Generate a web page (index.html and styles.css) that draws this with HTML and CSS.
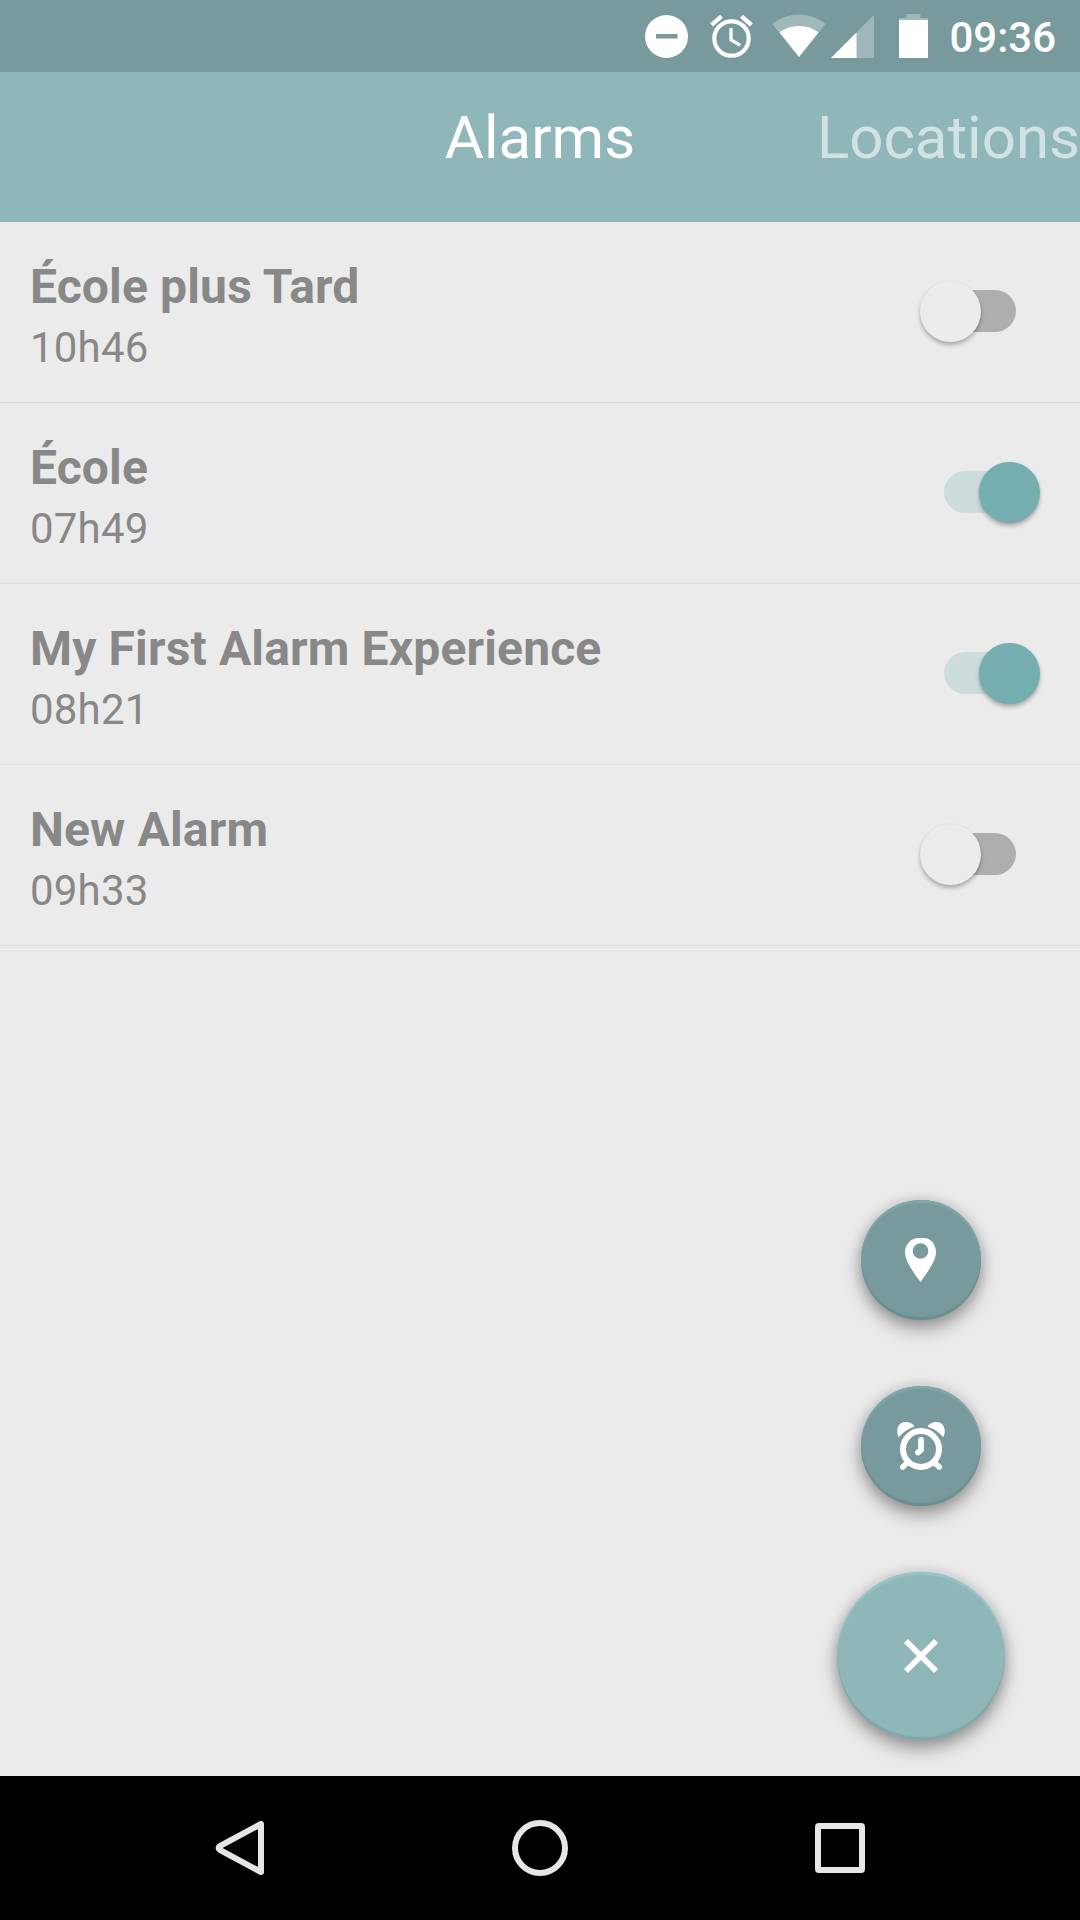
FILE: index.html
```
<!DOCTYPE html>
<html lang="en">
<head>
  <meta charset="UTF-8" />
  <meta name="viewport" content="width=device-width, initial-scale=1.0" />
  <title>Alarms</title>
  <link rel="stylesheet" href="styles.css">
</head>
<body>
  <div class="status-bar">
    <svg class="icon-dnd" width="44" height="44" viewBox="0 0 44 44">
      <circle cx="22.500" cy="22.500" r="21.500" fill="#fff" />
      <rect x="12" y="20" width="21.500" height="4.500" fill="#789a9c" />
    </svg>
    <svg class="icon-alarm" width="44" height="44" viewBox="0 0 44 44" fill="none" stroke="#fff">
      <circle cx="21.500" cy="24.500" r="17.200" stroke-width="4.200" />
      <path d="M1.600 10.800L11.500 2.400M41.400 10.800L31.500 2.400" stroke-width="4.300" />
      <path d="M21 14v11.800l9.200 5.600" stroke-width="3.200" />
    </svg>
    <svg class="icon-wifi" width="54" height="44" viewBox="0 0 54 44" fill="#fff">
      <path d="M27 43L.5 10C8 4 17 .5 27 .5S46 4 53.500 10z" opacity=".3" />
      <path d="M27 43L7.500 18.400C13 14.200 20 12 27 12s14 2.200 19.500 6.400z" />
    </svg>
    <svg class="icon-signal" width="43" height="43" viewBox="0 0 43 43" fill="#fff">
      <path d="M0 43L43 0v43z" opacity=".3" />
      <path d="M0 43l25.500-25.500V43z" />
    </svg>
    <svg class="icon-battery" width="29" height="44" viewBox="0 0 29 44" fill="#fff">
      <path d="M7.500 0h14v4H29v2H0V4h7.500z" opacity=".3" />
      <path d="M0 6h29v38H0z" />
    </svg>
    <span class="clock">09:36</span>
  </div>

  <header class="tabs">
    <span class="tab active">Alarms</span>
    <span class="tab next">Locations</span>
  </header>

  <main>
    <ul class="alarms">
      <li class="alarm">
        <div class="label">
          <div class="name">École plus Tard</div>
          <div class="time">10h46</div>
        </div>
        <div class="switch"><span class="thumb"></span></div>
      </li>
      <li class="alarm">
        <div class="label">
          <div class="name">École</div>
          <div class="time">07h49</div>
        </div>
        <div class="switch on"><span class="thumb"></span></div>
      </li>
      <li class="alarm">
        <div class="label">
          <div class="name">My First Alarm Experience</div>
          <div class="time">08h21</div>
        </div>
        <div class="switch on"><span class="thumb"></span></div>
      </li>
      <li class="alarm">
        <div class="label">
          <div class="name">New Alarm</div>
          <div class="time">09h33</div>
        </div>
        <div class="switch"><span class="thumb"></span></div>
      </li>
    </ul>

    <div class="fab-menu">
      <button class="fab mini" aria-label="Add location">
        <svg width="48" height="48" viewBox="0 0 48 48">
          <path fill="#fff" fill-rule="evenodd" d="M21 2h6C34 2 39 8.500 39 16.500c0 7-6 16.500-15.500 29.500C14 33.500 8 23.500 8 16.500 8 8.500 14 2 21 2zM23.500 7.200a7.800 7.800 0 1 0 0 15.600 7.800 7.800 0 0 0 0-15.600z" />
        </svg>
      </button>
      <button class="fab mini" aria-label="Add alarm">
        <svg width="48" height="48" viewBox="0 0 48 48" fill="none" stroke="#fff" stroke-linecap="round">
          <path d="M1.800 15.200C-2 8 1.500 0 8.500 0c4 0 7.500 1.500 8.800 4.700C11 6.500 6 10 1.800 15.200zM46.200 15.200C50 8 46.500 0 39.500 0c-4 0-7.500 1.500-8.800 4.700C37 6.500 42 10 46.200 15.200z" fill="#fff" stroke="none" />
          <circle cx="24" cy="27" r="18" stroke-width="6" />
          <path d="M24 18v10l-3 2.500" stroke-width="5.800" stroke-linejoin="round" />
          <path d="M10.500 40.500l-4.700 4.500M37.500 40.500l4.700 4.500" stroke-width="5.600" />
        </svg>
      </button>
      <button class="fab" aria-label="Close menu">
        <svg width="34" height="34" viewBox="0 0 34 34">
          <path d="M2 2l30 30M32 2L2 32" stroke="#fff" stroke-width="5.600" />
        </svg>
      </button>
    </div>
  </main>

  <nav class="nav-bar">
    <svg width="60" height="60" viewBox="0 0 60 60">
      <path d="M51 6v48L9.800 31.800q-2.500-1.800 0-3.600z" />
    </svg>
    <svg width="60" height="60" viewBox="0 0 60 60">
      <circle cx="30" cy="30" r="25" />
    </svg>
    <svg width="60" height="60" viewBox="0 0 60 60">
      <rect x="8" y="8" width="44" height="44" rx="1" />
    </svg>
  </nav>
</body>
</html>
```

FILE: styles.css
```
* {
  box-sizing: border-box;
}
body {
  margin: 0;
  height: 1920px;
  display: flex;
  flex-direction: column;
  background-color: #ebebeb;
  font-family: Roboto, 'Liberation Sans', sans-serif;
  overflow: hidden;
}
.status-bar {
  height: 72px;
  display: flex;
  justify-content: flex-end;
  align-items: center;
  padding-right: 24px;
  background-color: #789a9c;
}
.status-bar svg {
  display: block;
}
.icon-dnd {
  margin-right: 22px;
}
.icon-alarm {
  margin-right: 18px;
}
.icon-wifi {
  margin-right: 5px;
}
.icon-signal {
  margin-right: 25px;
}
.icon-battery {
  margin-right: 21px;
}
.clock {
  color: #fff;
  font-size: 42px;
  font-weight: 500;
  line-height: 50px;
  padding-top: 3px;
}
.tabs {
  height: 150px;
  display: grid;
  grid-template-columns: 1fr auto 1fr;
  background-color: #8fb6b9;
  font-size: 60px;
  line-height: 70px;
  padding-top: 31px;
}
.tab.active {
  grid-column: 2;
  color: #fff;
}
.tab.next {
  justify-self: end;
  color: rgba(255, 255, 255, 0.6);
}
main {
  position: relative;
  flex: 1;
}
.alarms {
  list-style: none;
  margin: 0;
  padding: 0;
}
.alarm {
  height: 181px;
  display: flex;
  justify-content: space-between;
  align-items: center;
  padding: 0 64px 2px 30px;
  border-bottom: 1px solid #dcdcdc;
  color: #888;
}
.label {
  padding-top: 10px;
}
.name {
  font-size: 48px;
  font-weight: 700;
  line-height: 56px;
  letter-spacing: 0.15px;
}
.time {
  font-size: 42px;
  line-height: 50px;
  margin-top: 8px;
  letter-spacing: 0.2px;
}
.switch {
  position: relative;
  width: 72px;
  height: 42px;
  border-radius: 21px;
  background-color: #aeaeae;
}
.thumb {
  position: absolute;
  top: -9px;
  left: -24px;
  width: 61px;
  height: 61px;
  border-radius: 50%;
  background-color: #ececec;
  box-shadow: 0 3px 4px rgba(0, 0, 0, 0.28), 0 0 2px rgba(0, 0, 0, 0.05);
}
.switch.on {
  background-color: #cddddd;
}
.switch.on .thumb {
  left: 35px;
  background-color: #74aeb1;
}
/* floats over the list */
.fab-menu {
  position: absolute;
  right: 75px;
  bottom: 36px;
  display: flex;
  flex-direction: column;
  align-items: center;
  gap: 66px;
}
.fab {
  width: 168px;
  height: 168px;
  display: flex;
  align-items: center;
  justify-content: center;
  padding: 0;
  border: none;
  border-radius: 50%;
  background-color: #8fb6b9;
  box-shadow: 0 9px 18px rgba(0, 0, 0, 0.34), 0 0 14px rgba(0, 0, 0, 0.14),
    inset 0 3px 1px #94c5c8, inset 0 -3px 1px #80a8aa;
}
.fab.mini {
  width: 120px;
  height: 120px;
  background-color: #789a9c;
  box-shadow: 0 9px 18px rgba(0, 0, 0, 0.34), 0 0 14px rgba(0, 0, 0, 0.14),
    inset 0 3px 1px #7da7a9, inset 0 -3px 1px #6b8f91;
}
.nav-bar {
  height: 144px;
  display: flex;
  justify-content: center;
  align-items: center;
  gap: 240px;
  background-color: #000;
}
.nav-bar svg {
  fill: none;
  stroke: #e6e6e6;
  stroke-width: 6;
  stroke-linejoin: round;
}
```
